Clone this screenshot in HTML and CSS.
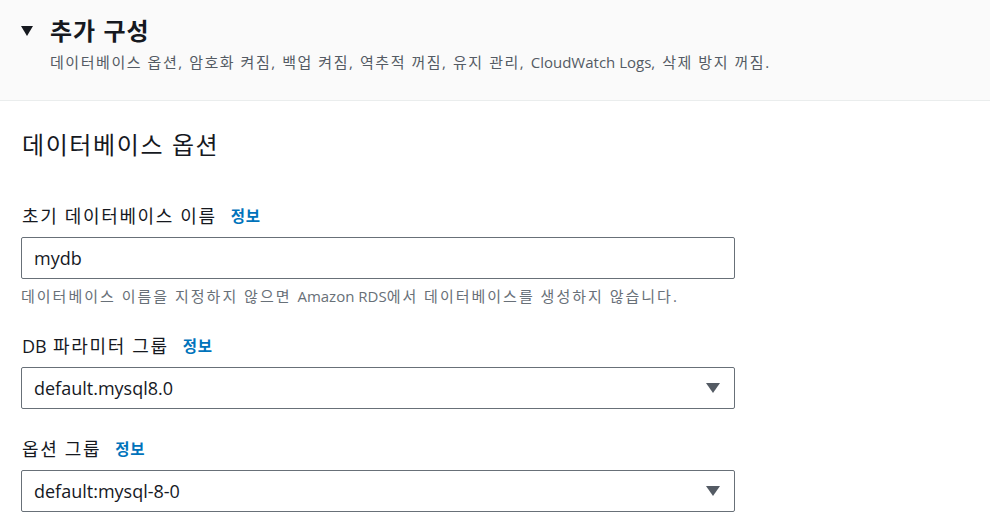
FILE: index.html
```html
<!doctype html>
<html lang="ko">
	<head>
		<title>추가 구성</title>
		<meta charset="utf-8">
		<link rel="stylesheet" href="styles.css">
	</head>

	<body>
		<div class="expander-header">
			<div class="expander-title">
				<span class="caret"></span>
				<h2>추가 구성</h2>
			</div>
			<p class="expander-desc">데이터베이스 옵션, 암호화 켜짐, 백업 켜짐, 역추적 꺼짐, 유지 관리, <span class="latin">CloudWatch Logs</span>, 삭제 방지 꺼짐.</p>
		</div>

		<div class="expander-body">
			<h3 class="section-title">데이터베이스 옵션</h3>

			<div class="field">
				<label class="field-label"><span class="label-text">초기 데이터베이스 이름</span><a class="info-link">정보</a></label>
				<div class="input">mydb</div>
				<div class="field-hint">데이터베이스 이름을 지정하지 않으면 <span class="latin">Amazon RDS</span>에서 데이터베이스를 생성하지 않습니다.</div>
			</div>

			<div class="field">
				<label class="field-label"><span class="label-text"><span class="latin">DB</span> 파라미터 그룹</span><a class="info-link">정보</a></label>
				<div class="input select">
					<span>default.mysql8.0</span>
					<span class="select-arrow"></span>
				</div>
			</div>

			<div class="field">
				<label class="field-label"><span class="label-text">옵션 그룹</span><a class="info-link">정보</a></label>
				<div class="input select">
					<span>default:mysql-8-0</span>
					<span class="select-arrow"></span>
				</div>
			</div>
		</div>
	</body>
</html>
```

FILE: styles.css
```css
html, body {
	margin:0;
	padding:0;
	background:#ffffff;
	color:#16191f;
	font-family:"Open Sans", "Noto Sans CJK KR", sans-serif;
	overflow:hidden;
}

.latin {
	letter-spacing:0;
}

.expander-header {
	height:101px;
	box-sizing:border-box;
	padding:16px 20px 0 20px;
	background:#fafafa;
	border-bottom:1px solid #eaeded;
}

.expander-title {
	display:flex;
	align-items:center;
	gap:17px;
	height:30px;
}

.caret {
	width:0;
	height:0;
	border-left:6px solid transparent;
	border-right:6px solid transparent;
	border-top:10px solid #16191f;
	margin-left:1px;
}

.expander-title h2 {
	margin:0;
	font-size:24px;
	font-weight:bold;
	line-height:30px;
	letter-spacing:1px;
}

.expander-desc {
	margin:6px 0 0 30px;
	font-size:15px;
	line-height:20px;
	letter-spacing:1.55px;
	color:#545b64;
}

.expander-body {
	padding:29px 21px 0 21px;
	width:714px;
}

.section-title {
	margin:0 0 45px 1px;
	font-size:24px;
	font-weight:normal;
	line-height:30px;
	letter-spacing:1.6px;
}

.field {
	margin-bottom:29px;
}

.field-label {
	display:flex;
	align-items:center;
	height:22px;
	margin:0 0 10px 1px;
	line-height:22px;
}

.label-text {
	font-size:18px;
	letter-spacing:1.65px;
}

.info-link {
	margin-left:14px;
	color:#0073bb;
	font-size:15.5px;
	font-weight:bold;
	letter-spacing:0.8px;
}

.input {
	height:42px;
	box-sizing:border-box;
	padding:0 12px;
	border:1px solid #687078;
	border-radius:2px;
	font-size:18px;
	line-height:40px;
}

.select {
	display:flex;
	justify-content:space-between;
	align-items:center;
}

.select-arrow {
	width:0;
	height:0;
	border-left:7px solid transparent;
	border-right:7px solid transparent;
	border-top:10px solid #545b64;
	margin-right:2px;
}

.field-hint {
	margin-top:7px;
	font-size:15px;
	line-height:20px;
	letter-spacing:2px;
	color:#687078;
}
```
